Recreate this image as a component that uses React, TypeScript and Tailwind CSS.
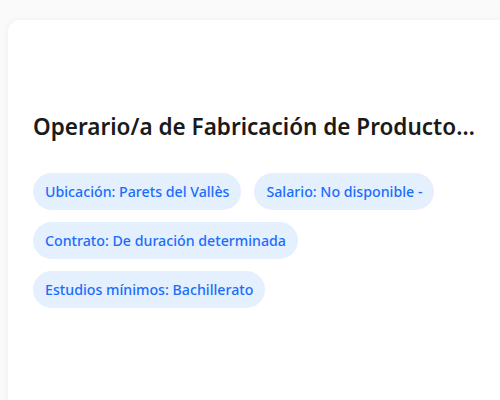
import React from "react";

const tags = [
  "Ubicación: Parets del Vallès",
  "Salario: No disponible -",
  "Contrato: De duración determinada",
  "Estudios mínimos: Bachillerato",
];

const App = () => {
  return (
    <div
      className="w-[500px] h-[400px] bg-[#fafafa] overflow-hidden pt-5 pl-2"
      style={{ fontFamily: "'Noto Sans', 'Open Sans', sans-serif" }}
    >
      <div className="w-[520px] h-[400px] bg-white rounded-tl-xl shadow-[0_0_6px_rgba(0,0,0,0.05)] pl-[25px] pt-[92px]">
        <h1 className="w-[446px] truncate text-[22.5px] leading-[30px] font-semibold text-[#1a1a1a]">
          Operario/a de Fabricación de Productos Químicos
        </h1>
        <div className="mt-[31px] flex flex-wrap gap-x-[13px] gap-y-3 w-[446px]">
          {tags.map((tag) => (
            <span
              key={tag}
              className="h-[37px] flex items-center px-3 rounded-full bg-[#e5f0ff] text-[#1a6dfc] text-[14.2px] font-medium"
            >
              {tag}
            </span>
          ))}
        </div>
      </div>
    </div>
  );
};

export default App;
